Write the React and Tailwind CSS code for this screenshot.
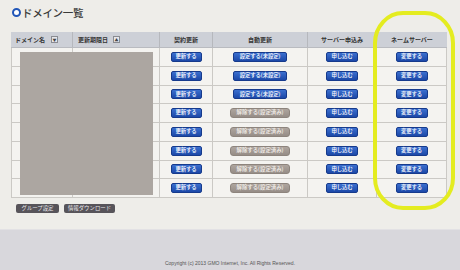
import React from "react";

const jp = { fontFamily: '"Noto Sans CJK JP", "Noto Sans", sans-serif' };

function BlueBtn({ children, w }) {
  return (
    <div
      className={`${w} h-[10px] flex items-center justify-center rounded-[2px] border border-[#163a8c] bg-gradient-to-b from-[#3b6fcf] to-[#1c48a8] text-white text-[5.4px] font-medium leading-none tracking-[-0.1px]`}
    >
      {children}
    </div>
  );
}

function GrayBtn({ children }) {
  return (
    <div className="w-[60px] h-[10px] flex items-center justify-center rounded-[3px] border border-[#8d847d] bg-gradient-to-b from-[#aea59e] to-[#968d87] text-[#f4f0ec] text-[5.4px] font-medium leading-none">
      {children}
    </div>
  );
}

function SortBox({ children }) {
  return (
    <span className="inline-flex w-[7px] h-[7px] items-center justify-center border border-[#8a8c92] bg-[#e6e7ea] text-[4px] leading-none text-[#444]">
      {children}
    </span>
  );
}

const cols = "grid grid-cols-[62px_87px_53px_95px_69px_70px]";

export default function App() {
  const rows = [0, 1, 2, 3, 4, 5, 6, 7];
  return (
    <div className="relative w-[460px] h-[270px] overflow-hidden bg-[#eeede9]" style={jp}>
      <div className="h-[229px] flex flex-col">
        <div className="h-[32px] flex items-start pt-[7px] pl-[12px] gap-[1px]">
          <div className="mt-[1px] w-[9px] h-[9px] rounded-full border-[2.5px] border-[#2156b8] bg-white" />
          <div className="text-[10.5px] leading-[12px] text-[#3a3a3a] font-medium tracking-[-0.3px]">ドメイン一覧</div>
        </div>
        <div className="ml-[11px] w-[436px] relative">
          <div className={`${cols} h-[16px] bg-[#cdd0d7] text-[6px] font-bold text-[#333] border-b border-[#b9bbc0]`}>
            <div className="flex items-center gap-[6px] pl-[4px] border-r border-[#b6b8bd]">
              <span>ドメイン名</span>
              <SortBox>▼</SortBox>
            </div>
            <div className="flex items-center gap-[5px] pl-[5px] border-r border-[#b6b8bd]">
              <span>更新期限日</span>
              <SortBox>▲</SortBox>
            </div>
            <div className="flex items-center justify-center border-r border-[#b6b8bd]">契約更新</div>
            <div className="flex items-center justify-center border-r border-[#b6b8bd]">自動更新</div>
            <div className="flex items-center justify-center border-r border-[#b6b8bd]">サーバー申込み</div>
            <div className="flex items-center justify-center">ネームサーバー</div>
          </div>
          {rows.map((i) => (
            <div key={i} className={`${cols} h-[18.75px] bg-[#f4f3f0] border-b border-[#cbc9c5]`}>
              <div className="border-r border-l border-[#cbc9c5]" />
              <div className="border-r border-[#cbc9c5]" />
              <div className="flex items-center justify-center border-r border-[#cbc9c5]">
                <BlueBtn w="w-[31px]">更新する</BlueBtn>
              </div>
              <div className="flex items-center justify-center border-r border-[#cbc9c5]">
                {i < 3 ? <BlueBtn w="w-[54px]">設定する(未設定)</BlueBtn> : <GrayBtn>解除する(設定済み)</GrayBtn>}
              </div>
              <div className="flex items-center justify-center border-r border-[#cbc9c5]">
                <BlueBtn w="w-[32px]">申し込む</BlueBtn>
              </div>
              <div className="flex items-center justify-center border-r border-[#cbc9c5]">
                <BlueBtn w="w-[32px]">変更する</BlueBtn>
              </div>
            </div>
          ))}
          <div className="absolute left-[9px] top-[20px] w-[133px] h-[143px] bg-[#aca6a1]" />
        </div>
        <div className="flex gap-[5px] ml-[16px] mt-[6px]">
          <div className="w-[43px] h-[9px] flex items-center justify-center rounded-[2px] bg-[#57545a] text-[#e8e6ea] text-[5.4px] leading-none">グループ設定</div>
          <div className="w-[51px] h-[9px] flex items-center justify-center rounded-[2px] bg-[#57545a] text-[#e8e6ea] text-[5.4px] leading-none">情報ダウンロード</div>
        </div>
      </div>
      <div className="h-[41px] bg-[#d8d7dc] border-t border-[#e2e1e4] flex items-end justify-center pb-[4px]">
        <div className="text-[5px] leading-none text-[#555]" style={{ fontFamily: '"Liberation Sans", Arial, sans-serif' }}>
          Copyright (c) 2013 GMO Internet, Inc. All Rights Reserved.
        </div>
      </div>
      <svg className="absolute left-[372px] top-[10px]" width="86" height="201" viewBox="0 0 86 201">
        <rect x="3" y="3" width="78" height="195" rx="28" ry="30" fill="none" stroke="#e4ec20" strokeWidth="4" />
      </svg>
    </div>
  );
}
